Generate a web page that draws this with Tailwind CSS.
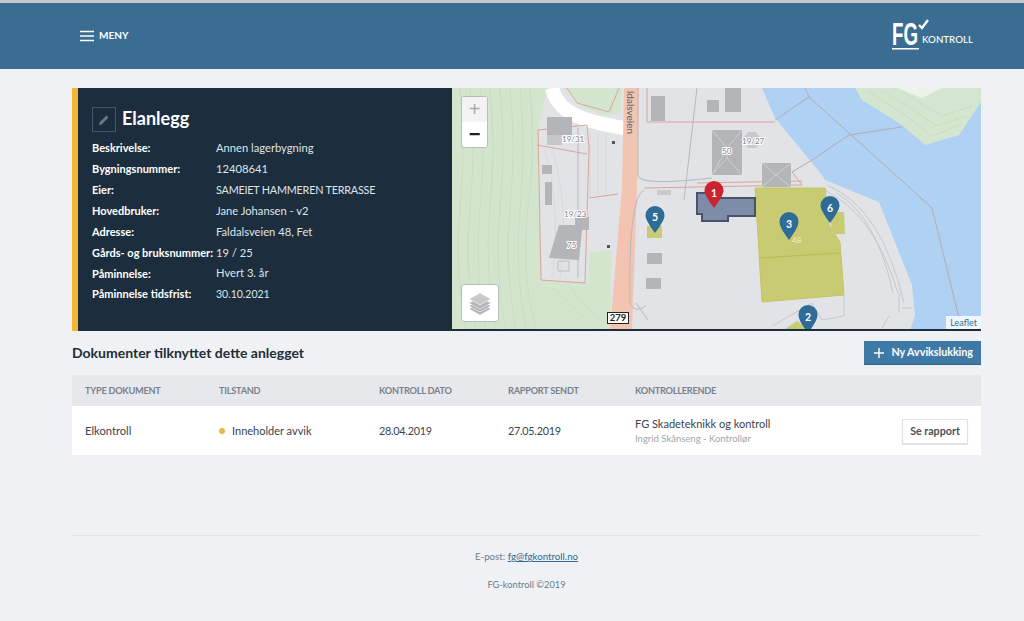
<!DOCTYPE html>
<html lang="no">
<head>
<meta charset="utf-8">
<title>Elanlegg</title>
<script src="https://cdn.jsdelivr.net/npm/@tailwindcss/browser@4"></script>
</head>
<body class="bg-[#f0f1f5] font-['Lato',sans-serif] text-[11.2px] text-[#2b3a45] h-[621px] overflow-hidden">
<header class="h-[69px] bg-[#3b6d92] border-t-[3px] border-[#c3c8cc] flex items-center justify-between pl-[80px] pr-[50px]">
  <div class="flex items-center gap-[5px] text-white font-bold text-[10px] -mt-[1px]">
    <svg width="14" height="12" viewBox="0 0 14 12" fill="none" stroke="white" stroke-width="1.6"><path d="M0 1.5h14M0 6h14M0 10.500h14"/></svg>
    <span>MENY</span>
  </div>
  <svg width="82" height="34" viewBox="0 0 82 34" fill="white" class="overflow-visible">
    <text x="0" y="26" font-family="Liberation Sans" font-weight="700" font-size="31" textLength="26" lengthAdjust="spacingAndGlyphs">FG</text>
    <rect x="0" y="29" width="27" height="1.5"/>
    <path d="M27 6l3 3 6-8" fill="none" stroke="white" stroke-width="2.4"/>
    <text x="30" y="24" font-family="Lato" font-size="10" font-weight="500" textLength="51" lengthAdjust="spacingAndGlyphs">KONTROLL</text>
  </svg>
</header>
<main class="pl-[72px] pr-[43px] pt-[19px]">
  <section class="flex h-[243px] border-l-[6px] border-[#f2b632]">
    <div class="w-[374px] shrink-0 bg-[#1c2e3d] pl-[14px] text-[#dfe4e8]">
      <div class="flex items-center gap-[6px] mt-[19px] mb-[6px]">
        <span class="w-[24px] h-[25px] border border-[#3f5a6e] flex items-center justify-center">
          <svg width="12" height="12" viewBox="0 0 12 12" fill="#6d7b86"><path d="M1 11l.6-2.600L8.400 1.600l2 2-6.800 6.800z"/></svg>
        </span>
        <h1 class="text-[18px] leading-[24px] font-bold text-white -mt-[4px]">Elanlegg</h1>
      </div>
      <dl class="grid grid-cols-[124px_1fr] auto-rows-[20.9px] items-center">
        <dt class="text-[11px] font-bold text-white">Beskrivelse:</dt><dd>Annen lagerbygning</dd>
        <dt class="text-[11px] font-bold text-white">Bygningsnummer:</dt><dd>12408641</dd>
        <dt class="text-[11px] font-bold text-white">Eier:</dt><dd class="text-[10.8px] tracking-[-0.2px]">SAMEIET HAMMEREN TERRASSE</dd>
        <dt class="text-[11px] font-bold text-white">Hovedbruker:</dt><dd>Jane Johansen - v2</dd>
        <dt class="text-[11px] font-bold text-white">Adresse:</dt><dd>Faldalsveien 48, Fet</dd>
        <dt class="text-[11px] font-bold text-white whitespace-nowrap">Gårds- og bruksnummer:</dt><dd>19 / 25</dd>
        <dt class="text-[11px] font-bold text-white">Påminnelse:</dt><dd>Hvert 3. år</dd>
        <dt class="text-[11px] font-bold text-white">Påminnelse tidsfrist:</dt><dd class="text-[10.5px]">30.10.2021</dd>
      </dl>
    </div>
    <div class="relative flex-1 overflow-hidden border-b-2 border-[#1c2e3d] bg-[#e1e3e6]">
      <svg width="529" height="243" viewBox="0 0 529 243" class="block" font-family="Lato">
        <!-- forest -->
        <path d="M0 0H95L86 42 90 192 136 195 137 165 160 162 158 243H0z" fill="#d4e5cd"/>
        <path d="M112 0H170L168 26 150 27 130 18z" fill="#d4e5cd"/>
        <g fill="none" stroke="#c5dabd" stroke-width=".7">
          <path d="M8 0Q14 60 8 120T14 243M18 0Q24 60 18 120T24 243M28 0Q34 60 28 120T34 243M38 0Q44 60 38 120T44 243M48 0Q54 60 48 120T54 243M58 0Q64 60 58 120T64 243M68 0Q74 60 68 120T74 243M78 0Q84 60 76 120T84 243"/>
          <path d="M100 200Q120 215 145 243M115 195Q130 215 152 235"/>
        </g>
        <!-- gray contour lines on lots -->
        <g fill="none" stroke="#d3d5d7" stroke-width=".7">
          <path d="M92 60Q110 120 100 190M100 60Q118 120 108 190M138 45V110M146 45V110M154 45V108"/>
        </g>
        <!-- white road -->
        <path d="M100 0C106 25 130 33 172 40" fill="none" stroke="#fff" stroke-width="14"/>
        <!-- main road -->
        <path d="M172 0H187L185 100 180 243H158L170 100z" fill="#f3c4b2"/>
        <text transform="translate(175 3) rotate(90)" font-size="10" fill="#59656f">ldalsveien</text>
        <!-- property lines -->
        <g fill="none" stroke="#dca597" stroke-width="1">
          <path d="M86 42L135 37 137 60 133 195 89 192z"/>
          <path d="M85 57L135 66"/>
          <path d="M137 110L166 106"/>
          <path d="M115 0L125 15 157 24 167 0"/>
          <path d="M195 34H323M195 34V0"/>
          <path d="M192 100L350 97 340 84"/>
          <path d="M245 95L350 93"/>
        </g>
        <g fill="none" stroke="#b7b9bc" stroke-width="1">
          <path d="M186 0V88Q190 98 260 90"/>
          <path d="M192 102Q176 110 178 215 182 226 194 218"/>
          <path d="M126 40V190"/>
          <path d="M245 0L232 112"/>
          <path d="M184 215L196 232"/>
        </g>
        <!-- water -->
        <path d="M310 0L323 30 370 87 373 92 427 114 460 197 463 227 458 243H529V0z" fill="#afd1f3"/>
        <path d="M403 0L410 12 450 37 473 57 507 47 529 14V0z" fill="#d4e6cf"/>
        <path d="M445 0L470 10 490 0z" fill="#eef3ea"/>
        <g fill="none" stroke="#c5dabd" stroke-width=".7">
          <path d="M415 3L455 28 480 48 510 36M430 3L462 22 484 38 515 28M450 3L470 16 490 28 520 18"/>
        </g>
        <g fill="none" stroke="#b2abb3" stroke-width="1">
          <path d="M353 0L357 9 480 120 507 230"/>
          <path d="M357 9L323 32M397 47L360 72 340 84M397 47L450 39"/>
        </g>
        <g fill="none" stroke="#c0c2c5" stroke-width=".8">
          <path d="M375 97Q430 120 452 215"/>
          <path d="M372 102Q422 125 446 205"/>
          <path d="M385 105Q425 130 441 205"/>
          <path d="M392 207V228L370 232 360 215 320 238"/>
          <path d="M447 205V225M450 220H460M430 240L437 228"/>
        </g>
        <!-- buildings -->
        <g fill="#b4b5b8">
          <path d="M95 29H120V47H95z"/>
          <path d="M95 47H110V57H95z" fill="#c6c7c9"/>
          <path d="M90 77H100V86H90z"/>
          <path d="M93 94H100V117H93z"/>
          <path d="M107 137H123V129H137V142H130L127 172 97 170z"/>
          <path d="M199 8H213V33H199z"/>
          <path d="M255 12H267V24H255z"/>
          <path d="M273 0H289V24H273z"/>
          <path d="M195 165H210V176H195z"/>
          <path d="M194 190H209V201H194z"/>
          <path d="M260 42H290V87H260z"/>
          <path d="M310 75H339V99H310z"/>
          <path d="M205 102H219V107H205z" fill="#c9cacc"/>
          <path d="M296 44H304L309 51 304 60H296L290 51z" fill="#c8c9cb"/>
        </g>
        <path d="M106 173h11v10h-11z" fill="none" stroke="#bdbec0"/>
        <path d="M260 42L275 60 260 87M290 42L275 60M275 60V70L260 87M275 70L290 87" stroke="#cfd0d2" fill="none"/>
        <path d="M310 75L324 87 339 75M310 99L324 87 339 99" stroke="#d0d1d3" fill="none"/>
        <path d="M160 53h3v3h-3zM155 157h3v3h-3z" fill="#555"/>
        <g font-size="8" fill="#7e8286" stroke="#fff" stroke-width="2" paint-order="stroke">
          <text x="110" y="54">19/31</text>
          <text x="112" y="129">19/23</text>
          <text x="115" y="160">75</text>
          <text x="290" y="56">19/27</text>
          <text x="270" y="66">50</text>
        </g>
        <!-- yellow -->
        <path d="M303 100L373 100 377 137 388 154 392 207 310 214z" fill="#c9cb72" stroke="#c4c65f"/>
        <path d="M307 170L388 165" stroke="#b7b95a"/>
        <path d="M378 124H392L393 146H380z" fill="#c9cb72"/>
        <path d="M195 138H210V150H195z" fill="#c9cb72"/>
        <path d="M330 243L345 233 360 243z" fill="#c9cb72"/>
        <text x="340" y="155" font-size="8" fill="#f1efb8">48</text>
        <!-- main building -->
        <path d="M245 105H260V110H303V128H276V133H250V126H245z" fill="#7c8ca9" stroke="#4a5468" stroke-width="2"/>
        <!-- pins -->
        <g font-size="10.500" font-weight="700" fill="#fff" text-anchor="middle">
          <g><path d="M203 145C197 137 193.500 131 193.500 127.500A9.500 9.500 0 0 1 212.500 127.500C212.500 131 209 137 203 145z" fill="#2e6b96"/><text x="203" y="133">5</text></g>
          <g><path d="M337 152C331 144 327.500 138 327.500 133.500A9.500 9.500 0 0 1 346.500 133.500C346.500 138 343 144 337 152z" fill="#2e6b96"/><text x="337" y="140">3</text></g>
          <g><path d="M378 135C372 127 368.500 121 368.500 117.500A9.500 9.500 0 0 1 387.500 117.500C387.500 121 384 127 378 135z" fill="#2e6b96"/><text x="378" y="124">6</text></g>
          <g><path d="M356 245C350 237 346.500 231 346.500 226.500A9.500 9.500 0 0 1 365.500 226.500C365.500 231 362 237 356 245z" fill="#2e6b96"/><text x="356" y="233">2</text></g>
          <g><path d="M262 120C256 112 252.500 106 252.500 102.500A9.500 9.500 0 0 1 271.500 102.500C271.500 106 268 112 262 120z" fill="#c9242f"/><text x="262" y="109">1</text></g>
        </g>
      </svg>
      <!-- zoom control -->
      <div class="absolute left-[9px] top-[8px] w-[27px] h-[52px] bg-white border border-[#b9bcbf] rounded-[3px] flex flex-col overflow-hidden">
        <span class="h-[25px] bg-[#f3f3f3] text-[#a9abae] text-[20px] leading-[24px] text-center font-['Liberation_Sans']">+</span>
        <span class="flex-1 text-[#222] text-[20px] leading-[24px] text-center font-['Liberation_Sans'] font-bold">−</span>
      </div>
      <!-- layers -->
      <div class="absolute left-[9px] top-[196px] w-[38px] h-[38px] bg-white border border-[#b9bcbf] rounded-[3px] flex items-center justify-center">
        <svg width="24" height="24" viewBox="0 0 24 24" fill="#b1b3b6" stroke="#fff" stroke-width=".6"><path d="M12 12l11 6-11 6-11-6z"/><path d="M12 9l11 6-11 6-11-6z"/><path d="M12 6l11 6-11 6-11-6z"/><path d="M12 2l11 6-11 6-11-6z" fill="#c6c8ca"/></svg>
      </div>
      <span class="absolute left-[155px] top-[224px] h-[12px] w-[22px] text-center bg-white border border-[#222] text-[#222] text-[9.5px] leading-[10px] font-bold">279</span>
      <span class="absolute right-0 bottom-0 bg-white/80 px-[4px] text-[#3b6d92] text-[9px] leading-[13px]">Leaflet</span>
    </div>
  </section>
  <div class="flex items-center justify-between h-[44px] mt-0">
    <h2 class="text-[#222d36] text-[14px] font-bold -mt-[2px]">Dokumenter tilknyttet dette anlegget</h2>
    <button class="h-[24px] w-[117px] bg-[#3f7aa6] border-b border-[#2e6088] text-white text-[10.7px] font-bold flex items-center justify-end gap-[6px] pr-[8px]">
      <svg width="12" height="12" viewBox="0 0 12 12" stroke="white" stroke-width="1.4"><path d="M6 1v10M1 6h10"/></svg>Ny Avvikslukking
    </button>
  </div>
  <div class="grid grid-cols-[134px_160px_129px_127px_1fr] h-[31px] items-center bg-[#e6e8ec] px-[13px] text-[9.2px] tracking-[-0.25px] font-bold text-[#79828a]">
    <span>TYPE DOKUMENT</span><span>TILSTAND</span><span>KONTROLL DATO</span><span>RAPPORT SENDT</span><span>KONTROLLERENDE</span>
  </div>
  <div class="grid grid-cols-[134px_160px_129px_127px_1fr] h-[49px] items-center bg-white px-[13px] pt-[1px] text-[#3a444d] text-[11.2px]">
    <span>Elkontroll</span>
    <span class="flex items-center gap-[7px] text-[11px]"><i class="w-[6px] h-[6px] rounded-full bg-[#e5b84f]"></i>Inneholder avvik</span>
    <span class="text-[10.8px] tracking-[-0.25px]">28.04.2019</span>
    <span class="text-[10.8px] tracking-[-0.25px]">27.05.2019</span>
    <div class="flex items-center justify-between">
      <div class="leading-[15px]"><div class="text-[11px]">FG Skadeteknikk og kontroll</div><div class="text-[9.5px] text-[#a1a7ac]">Ingrid Skånseng - Kontrollør</div></div>
      <button class="w-[66px] h-[25px] border border-[#dfe2e5] shadow-[0_1px_1px_rgba(0,0,0,.1)] font-bold text-[#46515a] text-[10.7px]">Se rapport</button>
    </div>
  </div>
  <footer class="mt-[80px] border-t border-[#e3e5e8] text-center text-[#6b7c8a] text-[9.7px]">
    <p class="mt-[13px]">E-post: <a class="text-[#2f6a92] underline">fg@fgkontroll.no</a></p>
    <p class="mt-[14px] text-[9.3px]">FG-kontroll ©2019</p>
  </footer>
</main>
</body>
</html>
